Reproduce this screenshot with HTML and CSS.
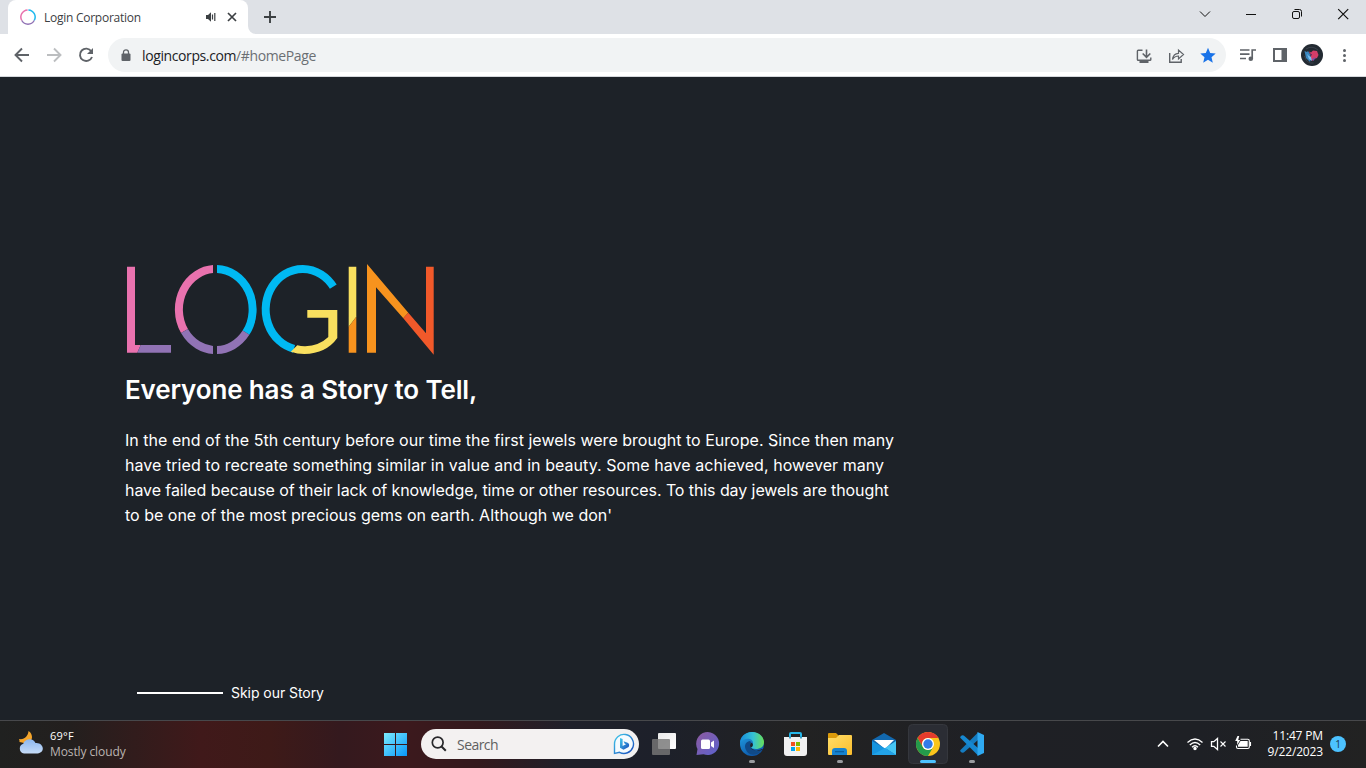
FILE: index.html
```html
<!DOCTYPE html>
<html lang="en">
<head>
<meta charset="utf-8">
<title>Login Corporation</title>
<link rel="stylesheet" href="styles.css">
</head>
<body>
<div class="screen">
  <header class="tabstrip">
    <div class="tab">
      <svg class="favicon" width="16" height="16" viewBox="0 0 16 16" fill="none" stroke-width="1.5"><path d="M7.6 .9A7.1 7.1 0 0 0 1.800 11.500" stroke="#e972ae"/><path d="M8.400 .9A7.100 7.100 0 0 1 14.200 11.500" stroke="#20b9ee"/><path d="M1.800 11.500A7.100 7.100 0 0 0 14.200 11.500" stroke="#9173b5"/></svg>
      <span class="tab-title">Login Corporation</span>
      <svg class="audio" width="12" height="12" viewBox="0 0 12 12"><path d="M1 4h2l3-2.800v9.600L3 8H1z" fill="#3c4043"/><path d="M7.500 3.600v4.800M9.800 2v8" stroke="#3c4043" stroke-width="1.200"/></svg>
      <svg width="10" height="10" viewBox="0 0 10 10"><path d="M1 1l8 8M9 1L1 9" stroke="#3c4043" stroke-width="1.700"/></svg>
    </div>
    <svg class="new-tab" width="22" height="34" viewBox="256 0 22 34"><path d="M248 26v8h8a8 8 0 0 1-8-8" fill="#fff"/><path d="M264 17h12M270 11v12" stroke="#3c4043" stroke-width="1.900"/></svg>
    <svg class="window-buttons" width="176" height="34" viewBox="1190 0 176 34" fill="none" stroke="#111" stroke-width="1"><path d="M1200 11.500l5 5 5-5"/><path d="M1246 14.500h10"/><rect x="1292.500" y="11.500" width="7" height="7" rx="1.500"/><path d="M1294.500 9.500h5q2 0 2 2v5"/><path d="M1338.200 9.200l10 10M1348.200 9.200l-10 10" stroke-width="1.200"/></svg>
  </header>

  <nav class="toolbar">
    <svg width="108" height="42" viewBox="0 34 108 42" fill="none" stroke="#5f6368" stroke-width="1.900"><path d="M29 55H16M22 48.500L15.500 55l6.500 6.500"/><path d="M47 55h13M54 48.500l6.500 6.500-6.500 6.500" stroke="#bcbec0"/><path d="M91.300 51.300a6.200 6.200 0 1 0 .7 5.700"/><path d="M93 48v6h-6z" fill="#5f6368" stroke="none"/></svg>
    <div class="address">
      <svg width="10" height="13" viewBox="0 0 10 13"><rect x=".5" y="4.500" width="9" height="7.500" rx="1" fill="#5f6368"/><path d="M2.500 5V3.300a2.500 2.500 0 0 1 5 0V5" fill="none" stroke="#5f6368" stroke-width="1.300"/></svg>
      <span class="url"><span class="host">logincorps.com</span>/#homePage</span>
      <svg class="page-actions" width="96" height="33" viewBox="1130 38 96 33" fill="none" stroke="#5f6368" stroke-width="1.400"><path d="M1142.500 49.200h-4.300q-.8 0-.8.800v8.500q0 .8.800.8h11.800q.8 0 .8-.8v-2"/><path d="M1139.500 60.700h9" stroke-width="2.600"/><path d="M1146.500 48.500v7M1142.700 52.500l3.800 3.800 3.800-3.800" stroke-width="1.600"/><path d="M1169.700 52v9.300h11.500v-3.300"/><path d="M1172.500 58.500c.5-4 2.700-6 6-6.200v-3.300l5 4.500-5 4.500v-3c-2.700 0-4.500 1.200-6 3.500z" stroke-width="1.200"/><path d="M1208 46.800l2.200 5.200 5.500.5-4.200 3.700 1.300 5.500-4.800-3-4.800 3 1.300-5.500-4.200-3.700 5.500-.5z" fill="#1a73e8" stroke="none"/></svg>
    </div>
    <svg width="140" height="42" viewBox="1226 34 140 42" fill="none" stroke="#5f6368" stroke-width="1.700"><path d="M1240 50h9.500M1240 54.200h9.500M1240 58.500h6M1252.200 58.500V50h3.800"/><circle cx="1250.800" cy="58.700" r="2.300" fill="#5f6368" stroke="none"/><path fill="#5f6368" stroke="none" fill-rule="evenodd" d="M1273 48h14v14h-14zM1275 50v10h6.500V50z"/><circle cx="1312" cy="55" r="11" fill="#222a32" stroke="none"/><path d="M1306 49q6-4 12 1M1304.500 56q2 8 9 7" stroke="#39414b" stroke-width="1"/><path d="M1304.500 51l2.500 1 1-1 2 3 1 5-1 3-4-4z" fill="#3985bd" stroke="none"/><path d="M1309 51.500l2 1 2-2 4 .5 1.500 4-1.500 3-3 1-2 2-2-3 1-2z" fill="#d43d68" stroke="none"/><path d="M1307 54l2 2 2 1 1 4-3-2z" fill="#76bff0" stroke="none"/><path d="M1312 59l4-2-2.500 4z" fill="#7951a8" stroke="none"/><path d="M1310 53l2 1.500-1 1.500z" fill="#472d60" stroke="none"/><g fill="#5f6368" stroke="none"><circle cx="1344.500" cy="50.500" r="1.500"/><circle cx="1344.500" cy="55.500" r="1.500"/><circle cx="1344.500" cy="60.500" r="1.500"/></g></svg>
  </nav>

  <main class="page">
    <svg class="logo" width="310" height="92" viewBox="126 264 310 92" role="img" aria-label="Login">
      <defs>
        <clipPath id="left-half"><path d="M170 260h43v98h-43z"/></clipPath>
        <clipPath id="right-half"><path d="M217 260h43v98h-43z"/></clipPath>
      </defs>
      <path d="M127 266.700h8V345h5.700l-3.400 7.700H127z" fill="#e972ae"/><path d="M140.700 345H171v7.700h-33.700z" fill="#9173b5"/>
      <g fill="none" stroke-width="8">
        <path clip-path="url(#left-half)" d="M184.500 331A36.800 40.500 0 0 1 215.800 269" stroke="#e972ae"/>
        <path clip-path="url(#left-half)" d="M184.500 331A36.800 40.500 0 0 0 215.800 350" stroke="#9173b5"/>
        <path clip-path="url(#right-half)" d="M215.800 269A36.800 40.500 0 0 1 246 332.700" stroke="#00b9f2"/>
        <path clip-path="url(#right-half)" d="M246 332.700A36.800 40.500 0 0 1 215.800 350" stroke="#9173b5"/>
        <path d="M333.300 286.700A37 40.500 0 1 0 294 348.800" stroke="#00b9f2"/>
      </g>
      <path d="M297.300 345.300q4 1 8 .9 14-.5 23-9.200v-19.300h-21V310h30v28q-11 15.500-33 16-7 0-13.500-2.300z" fill="#f9e05f"/>
      <path d="M348.700 266.700h7.600v50l-7.600 10z" fill="#f9e05f"/><path d="M356.300 316.700v36h-7.600v-26z" fill="#f7931e"/>
      <path d="M367 264l41.300 48.700-5 5.600L376 287.300v65.400h-9z" fill="#f7931e"/><path d="M408.300 312.700L426 333.300v-66.600h7.700v88l-30.400-36.400z" fill="#f1592a"/>
    </svg>
    <h1 class="heading">Everyone has a Story to Tell,</h1>
    <p class="story">
      <span class="line line-1">In the end of the 5th century before our time the first jewels were brought to Europe. Since then many</span>
      <span class="line line-2">have tried to recreate something similar in value and in beauty. Some have achieved, however many</span>
      <span class="line line-3">have failed because of their lack of knowledge, time or other resources. To this day jewels are thought</span>
      <span class="line line-4">to be one of the most precious gems on earth. Although we don'</span>
    </p>
    <div class="skip"><span class="rule"></span><span class="skip-label">Skip our Story</span></div>
  </main>

  <footer class="taskbar">
    <div class="weather">
      <svg width="26" height="26" viewBox="18 730 26 26"><defs><linearGradient id="cloud" x2="0" y2="1"><stop stop-color="#8db7ee"/><stop offset="1" stop-color="#c6dcf8"/></linearGradient></defs><path d="M28.500 731c5 3 5 11-2 12.500l-7-1.500c0-1.500 0-2.500-.5-3 5.500 1 9-3 9.500-8z" fill="#f5a52b"/><path d="M24 753.500a5 5 0 0 1-.7-9.700c1.500-5 9.200-6.500 12.200-.8 8-1 10.500 9.500 2 10.500z" fill="url(#cloud)"/></svg>
      <div><div class="temp">69°F</div><div class="sky">Mostly cloudy</div></div>
    </div>
    <div class="apps">
      <svg width="44" height="47" viewBox="373 721 44 47"><defs><linearGradient id="win" x2="1" y2="1"><stop stop-color="#7cecff"/><stop offset="1" stop-color="#0797fa"/></linearGradient></defs><path fill="url(#win)" d="M384 733h11v11h-11zM396 733h11v11h-11zM384 745h11v11h-11zM396 745h11v11h-11z"/></svg>
      <div class="search">
        <svg width="16" height="16" viewBox="0 0 16 16" fill="none" stroke="#28282b" stroke-width="1.700"><circle cx="6.700" cy="6.500" r="5.400"/><path d="M10.500 10.500l4.300 4.300" stroke-width="2"/></svg>
        <span>Search</span>
        <svg class="bing" width="22" height="22" viewBox="0 0 22 22"><defs><linearGradient id="bing" x2="1" y2="1"><stop stop-color="#42cbec"/><stop offset="1" stop-color="#1749bb"/></linearGradient></defs><path d="M1.500 20.400V11a9.500 9.500 0 1 1 5 8.300z" fill="#f5fbff" stroke="url(#bing)" stroke-width="1.400"/><path d="M7 5l2.600.9v7.100l3.400-1.700-1.500-.8-.9-2.300 4 1.500q2.500 1.500 1 4.200L10.500 16.800 7 14.800z" fill="url(#bing)"/></svg>
      </div>
      <svg width="44" height="47" viewBox="642 721 44 47"><defs><linearGradient id="view" x2="1" y2="1"><stop stop-color="#e9e9e9"/><stop offset="1" stop-color="#fff"/></linearGradient></defs><rect x="658" y="733" width="18" height="16" rx="1" fill="url(#view)"/><rect x="652" y="739" width="18" height="16" rx="1" fill="#777" opacity=".82"/></svg>
      <svg width="44" height="47" viewBox="686 721 44 47"><defs><linearGradient id="chat" x2="1" y2="1"><stop stop-color="#8e5a9f"/><stop offset="1" stop-color="#5b62ce"/></linearGradient></defs><path d="M696.500 755l1-6a11.500 11.500 0 1 1 6 5.300z" fill="url(#chat)"/><rect x="701" y="739.500" width="9" height="9.500" rx="1.500" fill="#fff"/><path d="M711 742.500l3-2v7.500l-3-2z" fill="#fff"/></svg>
      <svg width="44" height="47" viewBox="730 721 44 47"><defs><linearGradient id="edge-top" x2="1"><stop stop-color="#168bdc"/><stop offset=".55" stop-color="#35c1d5"/><stop offset="1" stop-color="#68df56"/></linearGradient><linearGradient id="edge-base" x2=".6" y2="1"><stop stop-color="#22a2e5"/><stop offset="1" stop-color="#0c55a8"/></linearGradient></defs><circle cx="752" cy="744" r="12" fill="url(#edge-base)"/><path d="M740 743c0-6 5-11 12-11 8 0 12 6 12 10 0 5-4 7-8 7-3 0-5-1-5-2s2-1 2-4c0-5-9-6-13 0z" fill="url(#edge-top)"/><path d="M750 741c-5 1-6 5-4 9 2 5 8 6 13 3l3-3c-6 2-12-1-12-5 0-1 1-2 1-3z" fill="#104a88"/><path d="M751 742.500q2 .5 2 2.500-.5 2-2 2.500c0 3 6 4 11 1.500l3 1v-3l-3 3c-6 2-12-1-12-5z" fill="#20222a"/><rect x="749" y="760" width="6" height="3" rx="1.500" fill="#999b9f"/></svg>
      <svg width="44" height="47" viewBox="774 721 44 47"><path d="M790 738v-4q0-1 1-1h9q1 0 1 1v4" fill="none" stroke="#25b7e9" stroke-width="2"/><path d="M784 737h23v16q0 3-3 3h-17q-3 0-3-3z" fill="#f1f1f1"/><path fill="#f25022" d="M791 742h4v4h-4z"/><path fill="#7fba00" d="M796 742h4v4h-4z"/><path fill="#00a4ef" d="M791 747h4v4h-4z"/><path fill="#ffb900" d="M796 747h4v4h-4z"/><path d="M790 736.500v2M801 736.500v2" stroke="#168bb4" stroke-width="1.600"/></svg>
      <svg width="44" height="47" viewBox="818 721 44 47"><defs><linearGradient id="folder" x2="1" y2="1"><stop stop-color="#ffde69"/><stop offset="1" stop-color="#fbbd2d"/></linearGradient></defs><path d="M828 734q0-1 1-1h7l3 3-3 3h-8z" fill="#dc9b0b"/><path d="M828 738h8l3-3h12q1 0 1 1v18q0 1-1 1h-22q-1 0-1-1z" fill="url(#folder)"/><path d="M832 755v-4q0-3 3-3h9q3 0 3 3v4z" fill="#1683d0"/><path d="M835 751h9v1.300h-9z" fill="#0b5f9f"/><rect x="837" y="760" width="6" height="3" rx="1.500" fill="#999b9f"/></svg>
      <svg width="44" height="47" viewBox="862 721 44 47"><path d="M872 740l12-7 12 7v15h-24z" fill="#1268ae"/><path d="M874 740h20l-9 9z" fill="#fff"/><path d="M872 741l14 8 10 6h-24z" fill="#1694df"/><path d="M896 741v14l-11-7z" fill="#45c6f5"/><path d="M872 755l13-7 11 7z" fill="#22a3e8"/></svg>
      <svg width="44" height="47" viewBox="906 721 44 47"><rect x="908.500" y="724.500" width="39" height="39" rx="4" fill="#2b2d34" stroke="#35373d"/><circle cx="928" cy="744" r="12" fill="#fbc51c"/><path d="M917.600 738A12 12 0 0 1 938.400 738H928a6 6 0 0 0-5.200 9z" fill="#e43b2d"/><path d="M917.600 738A12 12 0 0 0 928 756l5.200-9a6 6 0 0 1-10.400 0z" fill="#249a4b"/><circle cx="928" cy="744" r="6" fill="#fff"/><circle cx="928" cy="744" r="4.700" fill="#327be9"/><rect x="920" y="760" width="16" height="3" rx="1.500" fill="#4cc2ff"/></svg>
      <svg width="44" height="47" viewBox="950 721 44 47"><path d="M960.500 750q-.8.700 0 1.500l1.500 1.200 1.800-.1L978 740v-7.500z" fill="#157cc0"/><path d="M960.500 738q-.8-.7 0-1.500l1.500-1.200 1.800.1L978 748v7.500z" fill="#1688d1"/><path d="M977.500 732l6.500 3v18l-6.500 3z" fill="#2faaf2"/><rect x="969" y="760" width="6" height="3" rx="1.500" fill="#999b9f"/></svg>
    </div>
    <div class="tray">
      <svg width="104" height="47" viewBox="1150 721 104 47" fill="none" stroke="#fff" stroke-width="1.300"><path d="M1158 746.500l5-5 5 5" stroke-width="1.600"/><path d="M1187.500 742.500q7.500-7 15 0M1189.800 745q5.200-5 10.400 0M1192 747.300q3-3 6 0"/><circle cx="1195" cy="748.500" r="1.100" fill="#fff"/><path d="M1211.500 741.700h2.300l3.700-3.200v11l-3.700-3.200h-2.300z"/><path d="M1220.500 741.500l5 5M1225.500 741.500l-5 5" stroke-width="1.100"/><path d="M1240.500 739.200h7.300q1.500 0 1.500 1.500v6.300q0 1.500-1.500 1.500h-9.800q-1.500 0-1.500-1.500v-1.500" stroke-width="1.100"/><path d="M1240.500 741h7.200v5.800h-9.700v-1.800z" fill="#fff" stroke="none"/><path d="M1250.400 742v4"/><path d="M1237.500 736l-2.300 5h2v4l3-5h-2l1-4z" fill="#fff" stroke="none"/></svg>
      <div class="clock"><div class="time">11:47 PM</div><div class="date">9/22/2023</div></div>
      <div class="badge">1</div>
    </div>
  </footer>
</div>
</body>
</html>
```
FILE: styles.css
```css
* { box-sizing: border-box; }
body { margin: 0; overflow: hidden; font-family: "Open Sans", "Noto Sans", sans-serif; }
svg { display: block; flex: none; }
.screen { width: 1366px; height: 768px; display: flex; flex-direction: column; background: #1d2228; }

.tabstrip { height: 34px; background: #dee1e6; display: flex; padding-left: 8px; flex: none; }
.tab { width: 240px; background: #fff; border-radius: 8px 8px 0 0; display: flex; align-items: center; padding: 0 11px 0 12px; }
.tab-title { margin-left: 8px; font-size: 12px; letter-spacing: -.26px; color: #3c4043; white-space: nowrap; }
.audio { margin: 0 10px 0 auto; }
.new-tab { margin-left: 8px; overflow: visible; }
.window-buttons { margin-left: auto; }

.toolbar { height: 43px; background: #fff; border-bottom: 1px solid #d5d8dc; display: flex; align-items: center; flex: none; }
.address { width: 1118px; height: 34px; background: #f1f3f4; border-radius: 17px; display: flex; align-items: center; padding-left: 13px; }
.url { margin-left: 11px; font-size: 14px; letter-spacing: -.39px; color: #6b6f73; white-space: nowrap; }
.host { color: #202124; }
.page-actions { margin-left: auto; }

.page { height: 643px; padding: 187px 0 0 125px; color: #fff; font-family: Inter, sans-serif; flex: none; }
.logo { margin-left: 1px; }
.heading { margin: 16px 0 0; height: 36px; font-size: 26px; line-height: 36px; font-weight: 600; letter-spacing: -.14px; white-space: nowrap; }
.story { margin: 20px 0 0; font-size: 16px; line-height: 25px; }
.line { display: block; white-space: nowrap; }
.line-1 { letter-spacing: .017px; }
.line-2 { letter-spacing: .055px; }
.line-3 { letter-spacing: -.085px; }
.skip { margin: 155px 0 0 12px; height: 20px; display: flex; align-items: center; }
.rule { width: 86px; height: 2px; background: #fff; }
.skip-label { margin-left: 8px; font-size: 14px; line-height: 20px; letter-spacing: -.05px; white-space: nowrap; }

.taskbar { height: 48px; border-top: 1px solid #47484b; display: flex; color: #fff; position: relative; flex: none;
  background: linear-gradient(90deg, #202120 0, #231f1e 70px, #40191a 200px, #3e1a18 270px, #34191e 340px, #3c191d 405px, #33191d 480px, #1f202a 570px, #1d202a 660px, #222222 800px, #1f2025 1000px, #1e2025 1200px, #222222 1366px); }
.weather { width: 373px; display: flex; padding: 9px 0 0 18px; font-size: 11px; line-height: 16px; }
.weather > div { margin: -2px 0 0 6px; white-space: nowrap; }
.temp { letter-spacing: .2px; }
.sky { color: #bbb4b1; font-size: 12px; letter-spacing: -.1px; }
.apps { display: flex; align-items: center; }
.search { width: 218px; height: 30px; margin: 0 3px 1px 4px; border-radius: 15px; background: #f3f1f1; color: #606060; display: flex; align-items: center; padding: 0 4px 0 10px; font-size: 14px; }
.search span { margin-left: 10px; letter-spacing: -.55px; }
.bing { margin-left: auto; }
.tray { margin-left: auto; display: flex; align-items: center; }
.clock { width: 69px; margin-bottom: 1px; text-align: right; font-size: 12px; line-height: 16px; letter-spacing: -.15px; white-space: nowrap; }
.badge { width: 16px; height: 16px; border-radius: 50%; background: #4cc2ff; color: #173549; font-size: 10px; line-height: 16px; text-align: center; margin: 0 20px 1px 7px; }
```
